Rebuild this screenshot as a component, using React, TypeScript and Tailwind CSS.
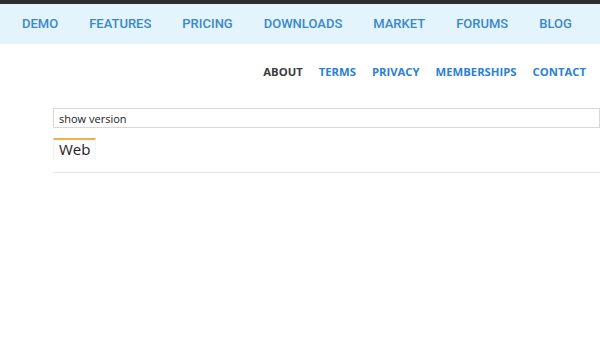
export default function App() {
  const mainLinks = ["DEMO", "FEATURES", "PRICING", "DOWNLOADS", "MARKET", "FORUMS", "BLOG"];
  const subLinks = ["TERMS", "PRIVACY", "MEMBERSHIPS", "CONTACT"];

  return (
    <div className="h-[346px] w-[600px] overflow-hidden bg-white">
      <div className="h-[4px] bg-[#2e2e2e]" />
      <nav className="flex h-[40px] items-center gap-[31px] bg-[#e3f4fc] pl-[22px] font-['Roboto',sans-serif] text-[13px] font-medium text-[#3b87cb]">
        {mainLinks.map((l) => (
          <a key={l} href="#" className="whitespace-nowrap">
            {l}
          </a>
        ))}
      </nav>

      <div className="flex justify-end gap-[16px] pr-[14px] pt-[20px] font-['Open_Sans',sans-serif] text-[11.3px] font-bold">
        <a href="#" className="text-[#3a3a3a]">ABOUT</a>
        {subLinks.map((l) => (
          <a key={l} href="#" className="text-[#2a7fd6]">
            {l}
          </a>
        ))}
      </div>

      <div className="ml-[53px] mt-[24px] font-['Open_Sans',sans-serif]">
        <input
          type="text"
          defaultValue="show version"
          className="h-[20px] w-full border border-[#d8d8d8] px-[5px] text-[11px] text-[#222] outline-none"
        />
        <div className="mt-[9px] flex">
          <div className="border-x border-t-2 border-x-[#f4f4f4] border-t-[#f0b050] bg-[#fcfcfc] px-[5px] pb-[1px] text-[15px] leading-[19px] text-[#222]">
            Web
          </div>
        </div>
        <div className="mt-[12px] h-px bg-[#e6e6e6]" />
      </div>
    </div>
  );
}
